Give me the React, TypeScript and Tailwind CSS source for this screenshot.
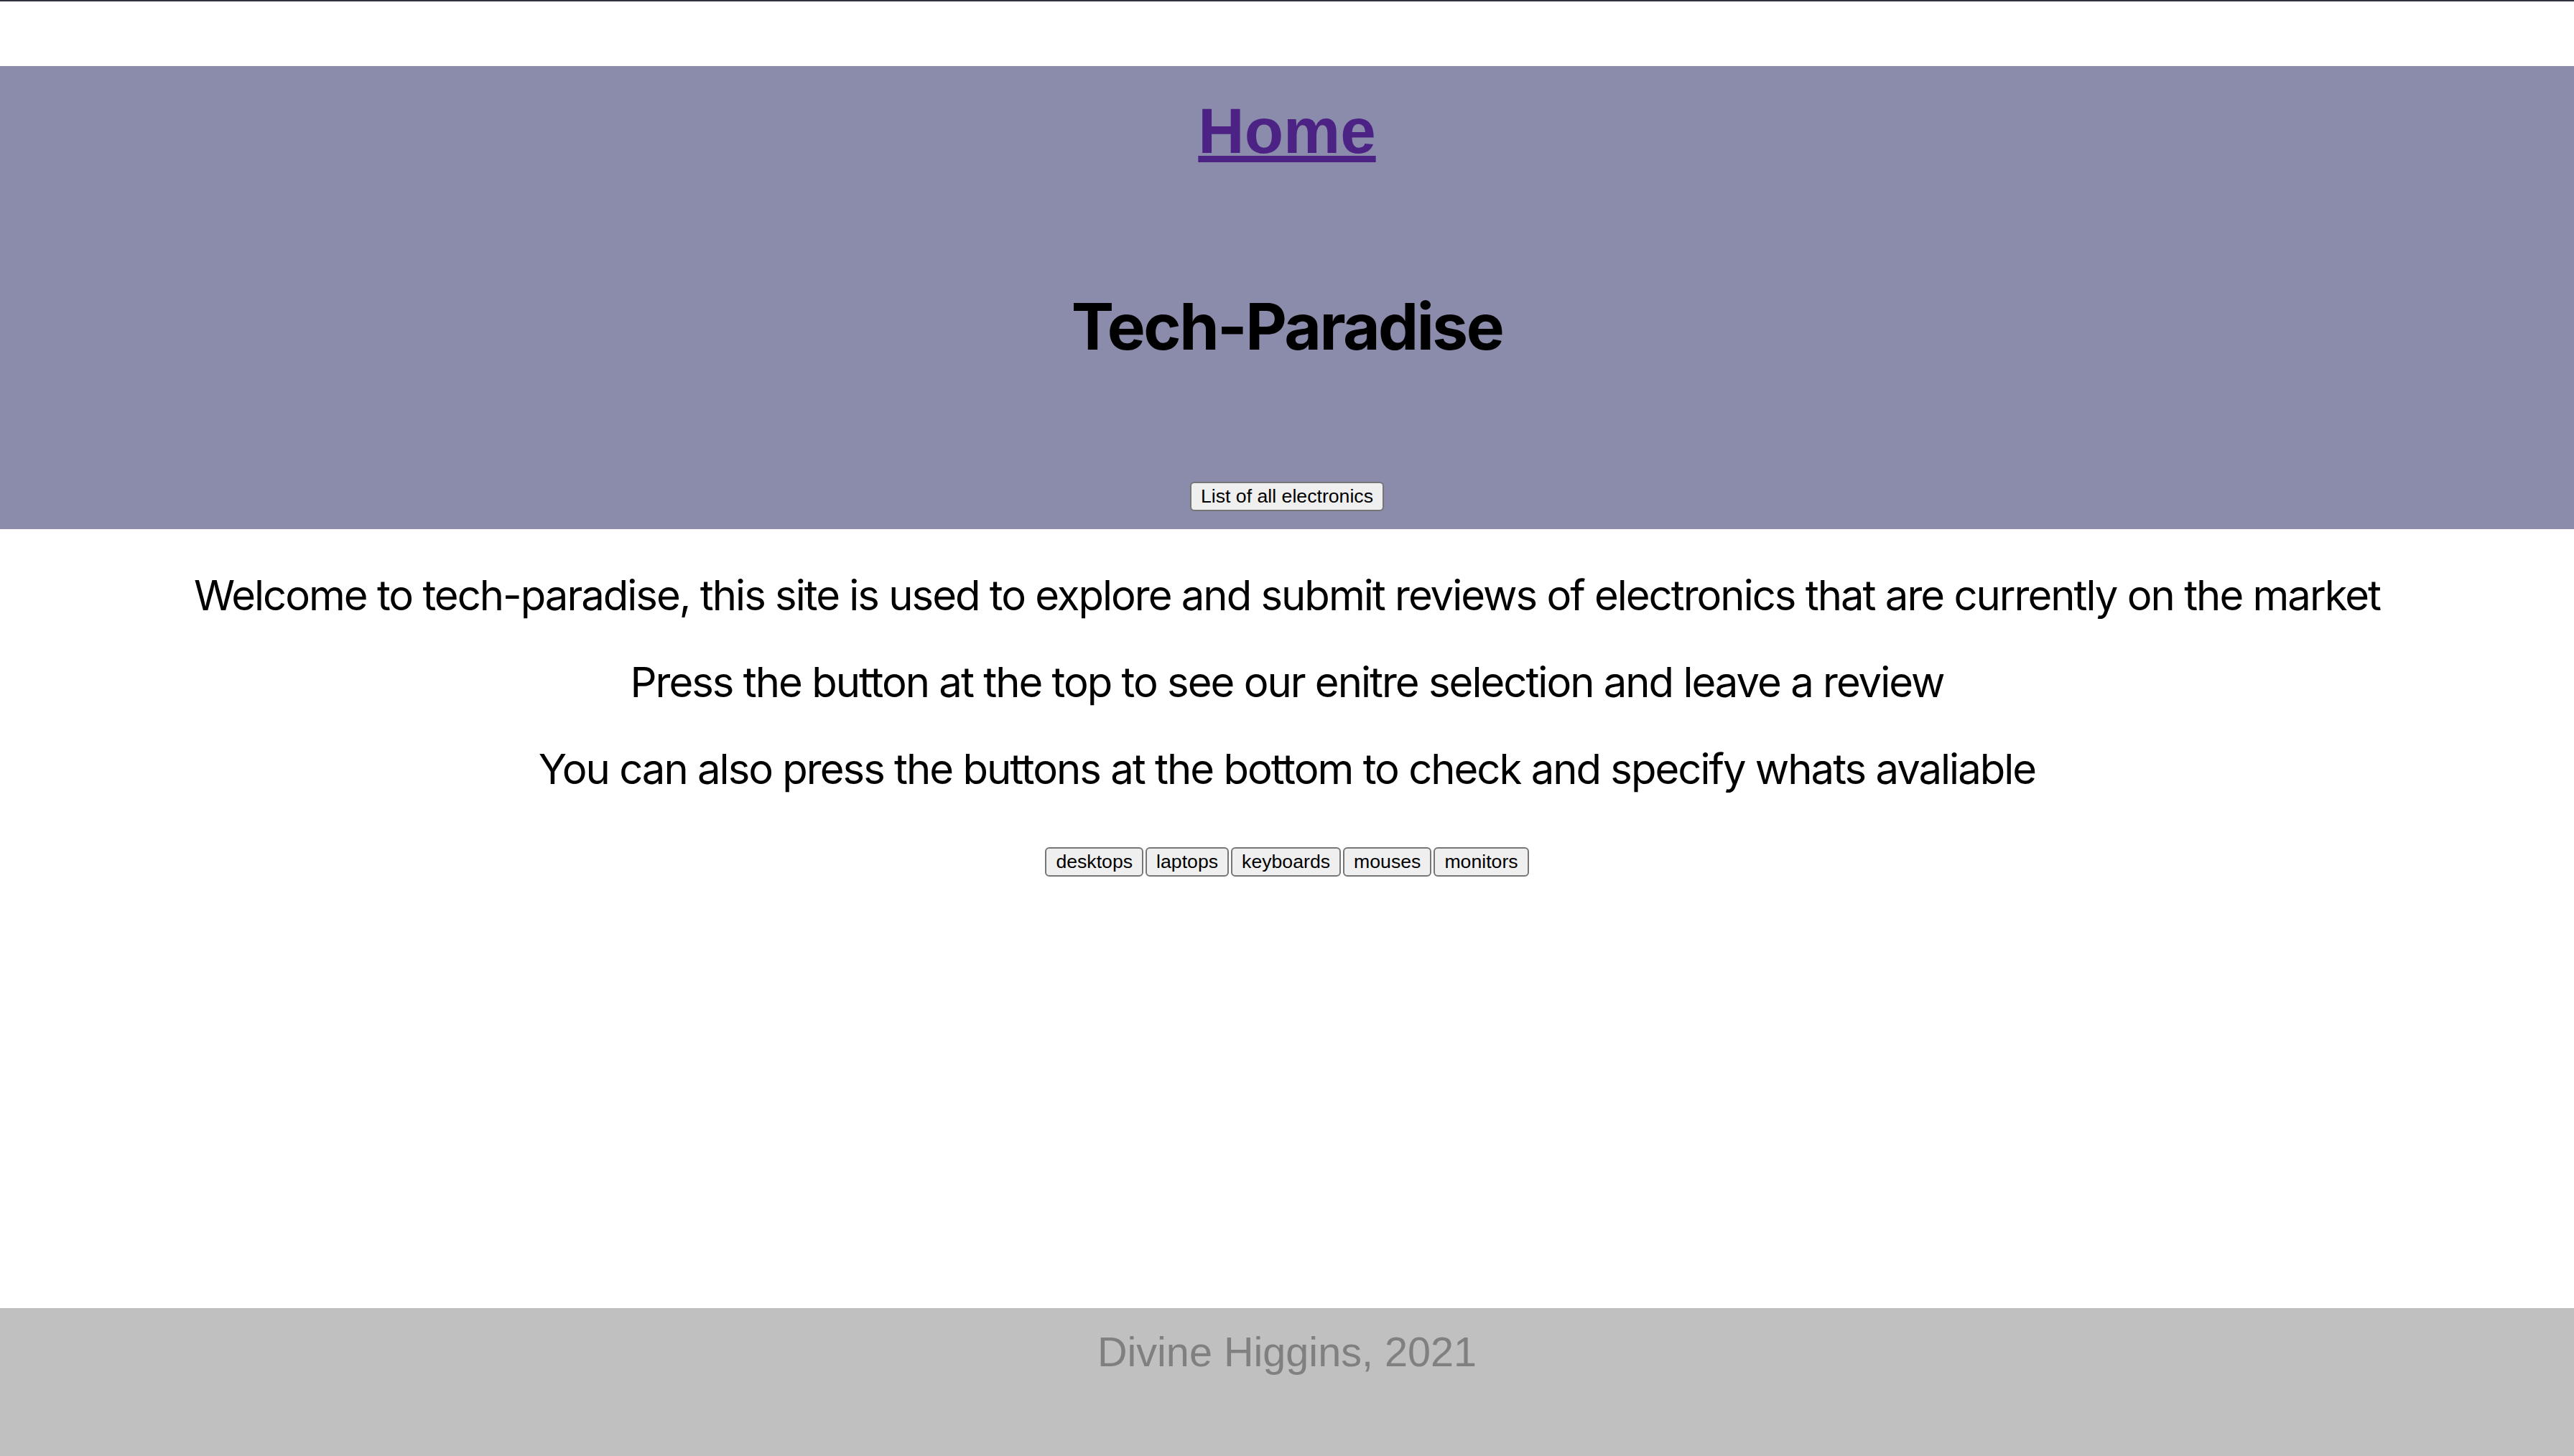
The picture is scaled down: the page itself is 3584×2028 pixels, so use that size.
import React from 'react'

const categories = ['desktops', 'laptops', 'keyboards', 'mouses', 'monitors']

const lines = [
  'Welcome to tech-paradise, this site is used to explore and submit reviews of electronics that are currently on the market',
  'Press the button at the top to see our enitre selection and leave a review',
  'You can also press the buttons at the bottom to check and specify whats avaliable',
]

function PlainButton({ label }: { label: string }) {
  return (
    <button className="bg-[#efefef] border-2 border-[#767676] rounded-[6px] px-[13px] py-[3px] text-[26.67px] leading-[normal] text-black font-['Liberation_Sans',Arial,sans-serif]">
      {label}
    </button>
  )
}

export default function App() {
  return (
    <div className="min-h-screen flex flex-col bg-white">
      <div className="h-[2px] bg-[#30323f]" />

      {/* Header */}
      <header className="mt-[90px] bg-[#8b8cab] flex flex-col items-center pt-[39px] pb-[25px]">
        <a
          href="#"
          className="text-[89px] leading-[102px] font-bold text-[#4c2385] underline decoration-[9px] underline-offset-[4px] font-['Liberation_Sans',Arial,sans-serif]"
        >
          Home
        </a>
        <h1 className="mt-[168px] text-[89px] leading-[108px] font-bold tracking-[-2.5px] text-black font-['Inter',sans-serif]">
          Tech-Paradise
        </h1>
        <div className="mt-[162px]">
          <PlainButton label="List of all electronics" />
        </div>
      </header>

      {/* Intro */}
      <main className="flex-1 flex flex-col items-center pt-[32px]">
        {lines.map((line) => (
          <p key={line} className="text-[58px] leading-[121px] tracking-[-2px] text-black text-center font-['Inter',sans-serif]">
            {line}
          </p>
        ))}
        <div className="mt-[48px] flex gap-[3px]">
          {categories.map((c) => (
            <PlainButton key={c} label={c} />
          ))}
        </div>
      </main>

      {/* Footer */}
      <footer className="h-[206px] bg-[#c0c0c0] flex justify-center pt-[28px]">
        <p className="text-[57.6px] leading-[normal] text-[#808080] font-['Liberation_Sans',Arial,sans-serif]">
          Divine Higgins, 2021
        </p>
      </footer>
    </div>
  )
}
